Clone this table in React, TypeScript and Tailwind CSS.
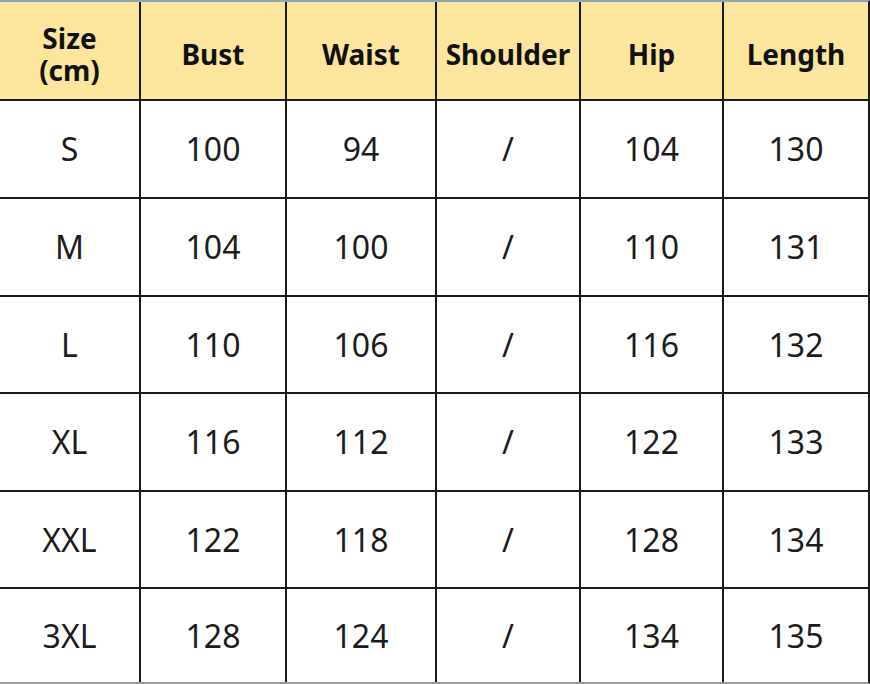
const headers = ["Size\n(cm)", "Bust", "Waist", "Shoulder", "Hip", "Length"];

const rows = [
  ["S", "100", "94", "/", "104", "130"],
  ["M", "104", "100", "/", "110", "131"],
  ["L", "110", "106", "/", "116", "132"],
  ["XL", "116", "112", "/", "122", "133"],
  ["XXL", "122", "118", "/", "128", "134"],
  ["3XL", "128", "124", "/", "134", "135"],
];

export default function App() {
  return (
    <div
      className="w-[870px] h-[684px] bg-white"
      style={{ fontFamily: '"Noto Sans", "Open Sans", sans-serif' }}
    >
      <div className="grid grid-cols-[139px_144px_148px_142px_141px_144px] grid-rows-[97px_96px_96px_95px_96px_95px_93px] gap-[2px] bg-[#1a1a1a] border-t-2 border-t-[#8fa3b8] border-r-2 border-r-[#1a1a1a] border-b-2 border-b-[#9a9a9a]">
        {headers.map((h) => (
          <div
            key={h}
            className="bg-[#fce59c] flex items-center justify-center text-center whitespace-pre-line font-bold text-[28px] leading-[32px] pt-[6px] text-[#111]"
          >
            {h}
          </div>
        ))}
        {rows.map((row, i) =>
          row.map((cell, j) => (
            <div
              key={`${i}-${j}`}
              className="bg-white flex items-center justify-center text-[32px] text-[#1c1c1c]"
            >
              {cell}
            </div>
          ))
        )}
      </div>
    </div>
  );
}
